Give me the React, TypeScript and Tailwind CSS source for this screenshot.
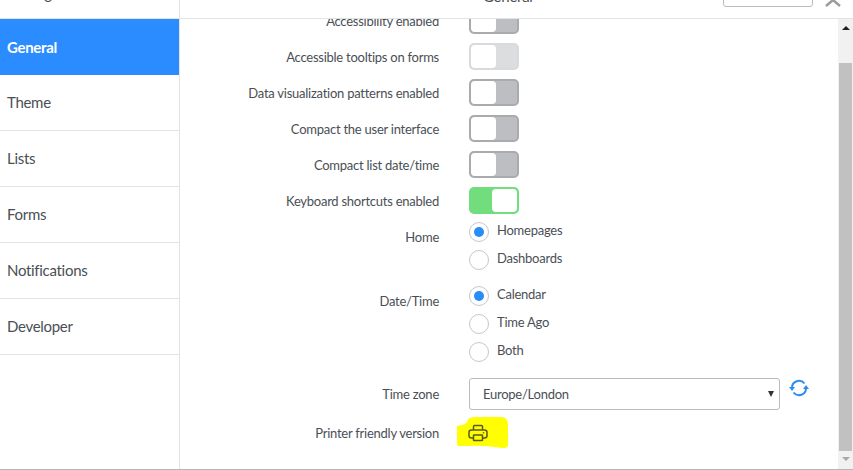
const navItems = ['General', 'Theme', 'Lists', 'Forms', 'Notifications', 'Developer']

const toggles = [
  { label: 'Accessibility enabled', state: 'off' },
  { label: 'Accessible tooltips on forms', state: 'disabled' },
  { label: 'Data visualization patterns enabled', state: 'off' },
  { label: 'Compact the user interface', state: 'off' },
  { label: 'Compact list date/time', state: 'off' },
  { label: 'Keyboard shortcuts enabled', state: 'on' },
]

function Toggle({ state }: { state: string }) {
  if (state === 'on') {
    return (
      <div className="flex h-[27px] w-[50px] justify-end rounded-[5px] border-2 border-[#71dd7c] bg-[#71dd7c]">
        <div className="h-full w-[25px] rounded-[4px] bg-white" />
      </div>
    )
  }
  if (state === 'disabled') {
    return (
      <div className="flex h-[27px] w-[50px] rounded-[5px] border-2 border-[#d9dadc] bg-[#dcddde]">
        <div className="h-full w-[25px] rounded-[4px] bg-white" />
      </div>
    )
  }
  return (
    <div className="flex h-[27px] w-[50px] rounded-[5px] border-2 border-[#a9abae] bg-[#bcbec2]">
      <div className="h-full w-[25px] rounded-[4px] bg-white" />
    </div>
  )
}

function Radio({ label, checked }: { label: string; checked?: boolean }) {
  return (
    <div className="flex h-7 items-center">
      <div className="flex h-5 w-5 items-center justify-center rounded-full border border-[#c4c6c9] bg-white">
        {checked && <div className="h-2.5 w-2.5 rounded-full bg-[#2a8cf5]" />}
      </div>
      <span className="mb-[3px] ml-[8px] text-[#4a4f55]">{label}</span>
    </div>
  )
}

function Row({ label, className, labelClass, children }: { label: string; className?: string; labelClass?: string; children: React.ReactNode }) {
  return (
    <div className={`flex ${className ?? ''}`}>
      <div className={`w-[259px] shrink-0 text-right text-[#4a4f55] ${labelClass ?? ''}`}>{label}</div>
      <div className="ml-[30px] flex-1">{children}</div>
    </div>
  )
}

export default function App() {
  return (
    <div className="flex h-[470px] w-[853px] flex-col overflow-hidden border-b border-[#b5b5b5] bg-white font-['Lato',sans-serif] text-[13px] tracking-[-0.25px]">
      {/* header, scrolled off the top */}
      <div className="flex h-[19px] shrink-0 border-b border-[#e2e3e5] text-[#4a4f55]">
        <div className="h-full w-[180px] shrink-0 overflow-hidden border-r border-[#e2e3e5]">
          <div className="-mt-[18px] pl-[7px] text-[15px]">Settings</div>
        </div>
        <div className="flex h-full flex-1 justify-between overflow-hidden">
          <div className="-mt-[15px] ml-[303px] text-[15px]">General</div>
          <div className="flex">
            <div className="-mt-5 h-[27px] w-[90px] rounded-[3px] border border-[#b9bbbe]" />
            <svg className="mx-[10px] h-[18px] w-5" viewBox="0 0 20 18" fill="none" stroke="#9a9ca0" strokeWidth="2.5">
              <path d="M3 -6 L17 6 M17 -6 L3 6" />
            </svg>
          </div>
        </div>
      </div>

      <div className="flex min-h-0 flex-1">
        <nav className="w-[180px] shrink-0 border-r border-[#e2e3e5] text-[15px] tracking-[-0.3px]">
          {navItems.map((item, i) => (
            <div
              key={item}
              className={
                i === 0
                  ? 'flex h-[56px] items-center bg-[#2a8cff] pl-[7px] font-bold text-white'
                  : 'flex h-[56px] items-center border-b border-[#e2e3e5] pl-[7px] text-[#4a4f55]'
              }
            >
              {item}
            </div>
          ))}
        </nav>

        <main className="min-w-0 flex-1 overflow-hidden">
          <div className="-mt-[17px] w-[658px]">
            {toggles.map((t) => (
              <Row key={t.label} label={t.label} labelClass="pt-[4px]" className="h-9 items-center">
                <Toggle state={t.state} />
              </Row>
            ))}
            <Row label="Home" labelClass="pt-[10px]">
              <Radio label="Homepages" checked />
              <Radio label="Dashboards" />
            </Row>
            <Row label="Date/Time" labelClass="pt-[10px]" className="mt-2">
              <Radio label="Calendar" checked />
              <Radio label="Time Ago" />
              <Radio label="Both" />
            </Row>
            <Row label="Time zone" labelClass="pt-[2px]" className="mt-[12px] h-8 items-center">
              <div className="flex items-center">
                <div className="flex h-8 w-[311px] items-center justify-between rounded-[3px] border border-[#b9bbbe] pl-[13px] pr-[5px] text-[#4a4f55]">
                  <span className="pt-[2px]">Europe/London</span>
                  <div className="h-0 w-0 border-x-[3.5px] border-t-[6px] border-x-transparent border-t-[#333]" />
                </div>
                <svg className="mb-[12px] ml-[9px] h-[18px] w-5" viewBox="0 0 20 18" fill="none" stroke="#2a8cf5" strokeWidth="2">
                  <path d="M15.5 4.5 A7 7 0 0 0 3 9" />
                  <path d="M4.5 13.5 A7 7 0 0 0 17 9" />
                  <path d="M0 8 H6 L3 12 Z M14 10 H20 L17 6 Z" fill="#2a8cf5" stroke="none" />
                </svg>
              </div>
            </Row>
            <Row label="Printer friendly version" labelClass="pt-[2px]" className="mt-[10px] h-[26px] items-center">
              <div className="relative h-5 w-5">
                {/* highlighter scribble over the icon */}
                <svg className="absolute -left-[12px] -top-[6px] h-[31px] w-[51px]" viewBox="0 0 51 31">
                  <path d="M0 9 C4 8 8 8 10 5 C11 1 14 0 20 0 L44 0 C49 0 51 3 51 8 L51 27 C51 30 50 31 46 31 C36 30 24 28 12 29 L2 29 C0 29 0 27 0 24 Z" fill="#ffff00" />
                </svg>
                <svg className="absolute -left-px top-0 h-5 w-5" viewBox="0 0 20 20" fill="none" stroke="#5a5a20" strokeWidth="1.5">
                  <path d="M5.5 7 V3.5 Q5.5 2.5 6.5 2.5 H13.5 Q14.5 2.5 14.5 3.5 V7" />
                  <rect x="1" y="7" width="18" height="8" rx="2.5" />
                  <rect x="5.5" y="12" width="9" height="5.5" rx="0.5" fill="#ffff00" />
                  <circle cx="15.5" cy="9.7" r="0.8" fill="#5a5a20" stroke="none" />
                </svg>
              </div>
            </Row>
          </div>
        </main>

        <div className="flex w-[15px] shrink-0 flex-col items-center bg-[#f1f1f1]">
          <div className="mt-[7px] h-0 w-0 border-x-[4px] border-b-[4px] border-x-transparent border-b-[#202020]" />
          <div className="mt-[33px] h-[388px] w-[13px] bg-[#c1c1c1]" />
          <div className="mt-[6px] h-0 w-0 border-x-[4px] border-t-[4px] border-x-transparent border-t-[#a8a8a8]" />
        </div>
      </div>
    </div>
  )
}
